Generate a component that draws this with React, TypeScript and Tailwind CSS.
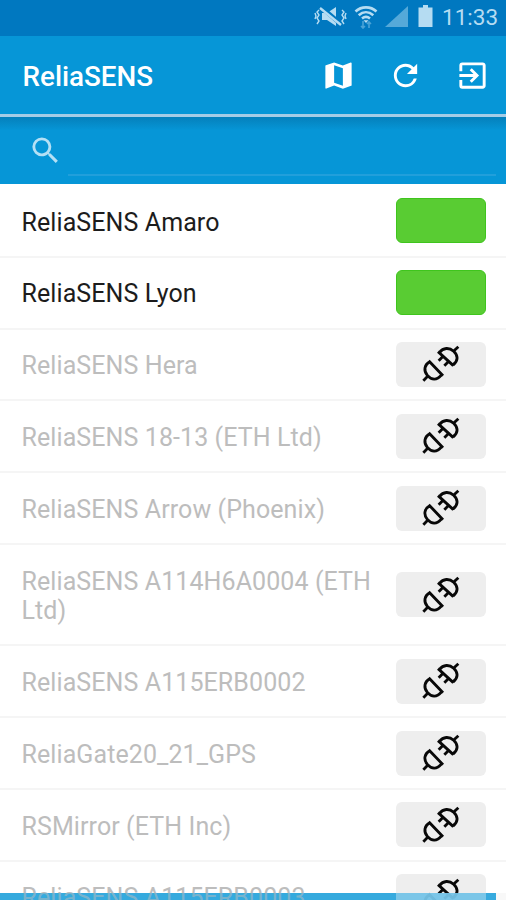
import React from "react";
import { MdExitToApp, MdMap, MdRefresh, MdSearch } from "react-icons/md";

type Device = {
  name: string;
  online?: boolean;
  tall?: boolean;
};

const devices: Device[] = [
  { name: "ReliaSENS Amaro", online: true },
  { name: "ReliaSENS Lyon", online: true },
  { name: "ReliaSENS Hera" },
  { name: "ReliaSENS 18-13 (ETH Ltd)" },
  { name: "ReliaSENS Arrow (Phoenix)" },
  { name: "ReliaSENS A114H6A0004 (ETH Ltd)", tall: true },
  { name: "ReliaSENS A115ERB0002" },
  { name: "ReliaGate20_21_GPS" },
  { name: "RSMirror (ETH Inc)" },
  { name: "ReliaSENS A115ERB0003" },
];

function PlugIcon() {
  return (
    <svg className="mr-[2px] size-10" viewBox="90 45 120 120" fill="none" stroke="#080808" strokeWidth="8.5">
      <path d="M144 68l46 42M148 71c12-16 30-16 43-4s15 28-2 41M192 65l13-12M160 81l-14 14M177 96l-14 14" />
      <path d="M116 95l43 45M119 98c-16 9-19 27-7 41s28 17 43-2M113 142l-13 13" />
    </svg>
  );
}

function StatusBar() {
  return (
    <div className="flex h-9 shrink-0 items-center justify-end bg-[#0078c0] pr-2 pb-[3px] text-[#b5dcf2]">
      <svg className="mr-[6px] h-6 w-[34px]" viewBox="0 0 34 24" fill="none" stroke="currentColor">
        <path d="M8 8h5l9-6v19l-9-6H8z" fill="currentColor" stroke="none" />
        <path d="M7 2l21 18" stroke="#0078c0" strokeWidth="4.5" />
        <path d="M6 3l21 17" strokeWidth="2.4" />
        <path d="M5 5l-2 2 2 3-2 3 2 3-2 3M1 8l1 3-1 3M28 5l2 2-2 3 2 3-2 3 2 3M32 8l-1 3 1 3" strokeWidth="1.4" />
      </svg>
      <svg className="mr-[7px] h-6 w-6" viewBox="0 0 24 24" fill="none" stroke="currentColor" strokeWidth="2.6">
        <path d="M1.5 6.5c6-5.5 15-5.5 21 0M4.7 10.2c4.5-4 10-4 14.6 0M8 13.5c2.5-2 5.5-2 8 0" />
        <path d="M9.5 15.2h5L12 18z" fill="currentColor" stroke="none" />
        <path d="M9 16v7m-2-2l2 2 2-2M15 23v-6m-2 2l2-2 2 2" stroke="#4aa3d6" strokeWidth="1.6" />
      </svg>
      <svg className="mr-[10px] h-6 w-[23px]" viewBox="0 0 23 24">
        <path d="M23 1v21H0z" fill="#55a9d9" />
      </svg>
      <svg className="mr-[9px] h-6 w-[15px]" viewBox="0 0 15 24" fill="currentColor">
        <path d="M5 0h5v2.5h4.5V22H.5V2.5H5z" />
      </svg>
      <span className="w-[56px] pt-[2px] text-right text-[22.5px] leading-none">11:33</span>
    </div>
  );
}

function DeviceRow({ name, online, tall }: Device) {
  return (
    <li
      className={`flex shrink-0 items-center justify-between border-b-2 border-[#f5f5f5] pr-5 pl-[21.5px] ${
        tall ? "h-[101.4px]" : "h-[71.8px]"
      }`}
    >
      <span
        className={`relative z-10 w-[365px] pt-[3px] text-[25px] leading-[29.5px] tracking-[0.09px] ${
          online ? "text-[#1c1c1c]" : "text-[#bdbdbd]"
        }`}
      >
        {name}
      </span>
      {online ? (
        <span className="h-[45px] w-[90px] rounded-md border border-[#3fc51d] bg-[#59cc33]" />
      ) : (
        <span className="flex h-[45px] w-[90px] items-center justify-center rounded-md bg-[#eeeeee]">
          <PlugIcon />
        </span>
      )}
    </li>
  );
}

export default function App() {
  return (
    <div className="relative flex h-[900px] w-[506px] flex-col overflow-hidden bg-white font-['Roboto',sans-serif]">
      <StatusBar />
      <header className="flex h-[81px] shrink-0 items-center justify-between border-b-3 border-[#a5cce6] bg-[#0696d7] pr-4 pl-[22.5px] text-white">
        <h1 className="pt-1 text-[27.8px] leading-9 font-medium">ReliaSENS</h1>
        <div className="flex gap-8">
          <MdMap className="size-[35px]" />
          <MdRefresh className="size-[35px]" />
          <MdExitToApp className="size-[35px]" />
        </div>
      </header>
      <div className="flex h-[67px] shrink-0 items-center bg-[#0696d7] bg-linear-to-b from-[#0580bb] to-[#0696d7] to-20% pl-7 pr-[10px]">
        <MdSearch className="size-[35px] text-[#b4e0f5]" />
        <div className="ml-[5px] h-[50px] flex-1 border-b-2 border-[#219fdb]" />
      </div>
      <ul className="flex flex-col pt-[2px]">
        {devices.map((device) => (
          <DeviceRow key={device.name} {...device} />
        ))}
      </ul>
      {/* translucent progress strip over the last row */}
      <div className="absolute bottom-0 left-0 h-[7px] w-full bg-[#f4f4f4]/60">
        <div className="h-full w-[496px] bg-[#0696d7]/80 pl-[396px]">
          <div className="h-full w-[90px] bg-white/35" />
        </div>
      </div>
      <div className="absolute bottom-0 left-0 z-20 h-[7px] w-[380px] bg-[#34a9dd]/50" />
    </div>
  );
}
